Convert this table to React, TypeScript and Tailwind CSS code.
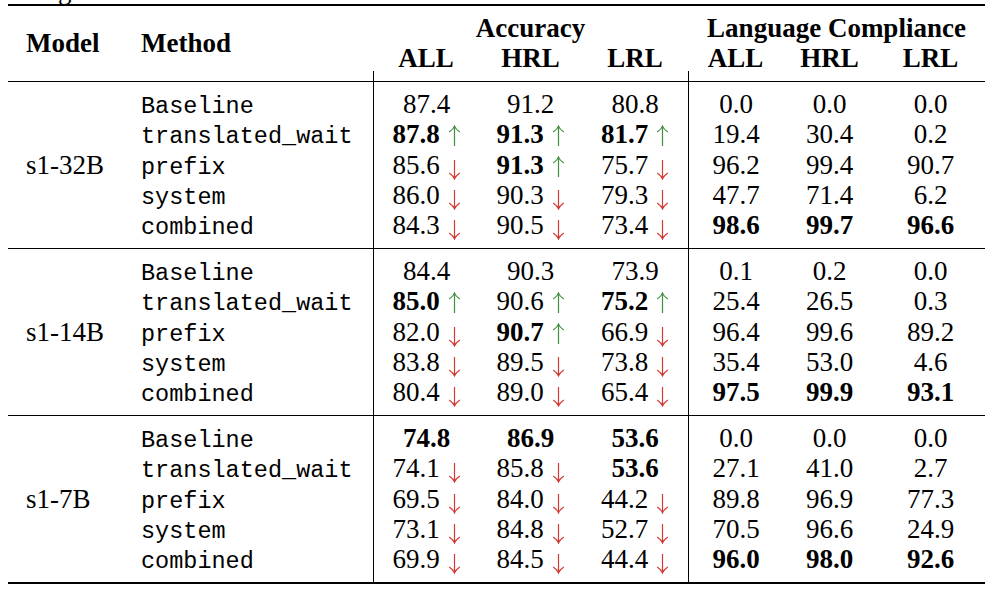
import React from "react";

type Cell = { v: string; b?: boolean; a?: "u" | "d" };

const S = "font-['Liberation_Serif',serif]";
const M = "font-['Liberation_Mono',monospace]";
const ROW = "h-[30.3px] leading-[30.3px]";

const Up = () => (
  <svg width="13" height="21" viewBox="0 0 13 21" className="inline-block ml-[8px] align-[-3px]">
    <path d="M6.5 1.6V21" stroke="#3f8f3f" strokeWidth="1.2" fill="none" />
    <path d="M1.2 7C3.4 5.5 5.6 3.8 6.5 1.1C7.4 3.8 9.6 5.5 11.8 7" stroke="#3f8f3f" strokeWidth="1.2" fill="none" />
  </svg>
);

const Down = () => (
  <svg width="13" height="20" viewBox="0 0 13 20" className="inline-block ml-[8px] align-[-6px]">
    <path d="M6.5 0V18.4" stroke="#d23a32" strokeWidth="1.2" fill="none" />
    <path d="M1.2 13C3.4 14.5 5.6 16.2 6.5 18.9C7.4 16.2 9.6 14.5 11.8 13" stroke="#d23a32" strokeWidth="1.2" fill="none" />
  </svg>
);

const c = (v: string, b?: boolean, a?: "u" | "d"): Cell => ({ v, b, a });

const methods = ["Baseline", "translated_wait", "prefix", "system", "combined"];

const groups: { name: string; acc: Cell[][]; lc: Cell[][] }[] = [
  {
    name: "s1-32B",
    acc: [
      [c("87.4"), c("91.2"), c("80.8")],
      [c("87.8", true, "u"), c("91.3", true, "u"), c("81.7", true, "u")],
      [c("85.6", false, "d"), c("91.3", true, "u"), c("75.7", false, "d")],
      [c("86.0", false, "d"), c("90.3", false, "d"), c("79.3", false, "d")],
      [c("84.3", false, "d"), c("90.5", false, "d"), c("73.4", false, "d")],
    ],
    lc: [
      [c("0.0"), c("0.0"), c("0.0")],
      [c("19.4"), c("30.4"), c("0.2")],
      [c("96.2"), c("99.4"), c("90.7")],
      [c("47.7"), c("71.4"), c("6.2")],
      [c("98.6", true), c("99.7", true), c("96.6", true)],
    ],
  },
  {
    name: "s1-14B",
    acc: [
      [c("84.4"), c("90.3"), c("73.9")],
      [c("85.0", true, "u"), c("90.6", false, "u"), c("75.2", true, "u")],
      [c("82.0", false, "d"), c("90.7", true, "u"), c("66.9", false, "d")],
      [c("83.8", false, "d"), c("89.5", false, "d"), c("73.8", false, "d")],
      [c("80.4", false, "d"), c("89.0", false, "d"), c("65.4", false, "d")],
    ],
    lc: [
      [c("0.1"), c("0.2"), c("0.0")],
      [c("25.4"), c("26.5"), c("0.3")],
      [c("96.4"), c("99.6"), c("89.2")],
      [c("35.4"), c("53.0"), c("4.6")],
      [c("97.5", true), c("99.9", true), c("93.1", true)],
    ],
  },
  {
    name: "s1-7B",
    acc: [
      [c("74.8", true), c("86.9", true), c("53.6", true)],
      [c("74.1", false, "d"), c("85.8", false, "d"), c("53.6", true)],
      [c("69.5", false, "d"), c("84.0", false, "d"), c("44.2", false, "d")],
      [c("73.1", false, "d"), c("84.8", false, "d"), c("52.7", false, "d")],
      [c("69.9", false, "d"), c("84.5", false, "d"), c("44.4", false, "d")],
    ],
    lc: [
      [c("0.0"), c("0.0"), c("0.0")],
      [c("27.1"), c("41.0"), c("2.7")],
      [c("89.8"), c("96.9"), c("77.3")],
      [c("70.5"), c("96.6"), c("24.9")],
      [c("96.0", true), c("98.0", true), c("92.6", true)],
    ],
  },
];

const NumCell = ({ cell }: { cell: Cell }) => (
  <div className={`${ROW} text-center whitespace-nowrap`}>
    <span className={cell.b ? "font-bold" : ""}>{cell.v}</span>
    {cell.a === "u" ? <Up /> : cell.a === "d" ? <Down /> : null}
  </div>
);

const Group = ({ g }: { g: (typeof groups)[number] }) => (
  <div className="flex h-[166px]">
    <div className={`w-[115px] pl-[18px] pt-[7px] ${S}`}>
      {[0, 1, 2, 3, 4].map((i) => (
        <div key={i} className={ROW}>
          {i === 2 ? g.name : "\u00a0"}
        </div>
      ))}
    </div>
    <div className={`w-[250px] pl-[18px] pt-[7px] ${M} text-[23.5px]`}>
      {methods.map((m) => (
        <div key={m} className="h-[30.3px] pt-[5px] leading-[25.3px]">
          {m}
        </div>
      ))}
    </div>
    <div className="w-[315px] border-l border-black pt-[7px] grid grid-cols-[105px_103px_106px] content-start">
      {g.acc.flat().map((cell, i) => (
        <NumCell key={i} cell={cell} />
      ))}
    </div>
    <div className="w-[297px] border-l border-black pt-[7px] grid grid-cols-[94px_93px_109px] content-start">
      {g.lc.flat().map((cell, i) => (
        <NumCell key={i} cell={cell} />
      ))}
    </div>
  </div>
);

export default function App() {
  return (
    <div className={`w-[1000px] h-[596px] bg-white text-black overflow-hidden ${S} text-[27px]`}>
      <div className="h-[4px] overflow-hidden pl-[58px]">
        <div className="-mt-[23px] leading-[27px]">g</div>
      </div>
      <div className="ml-[8px] w-[977px]">
        <div className="h-[2px] bg-black" />
        <div className="grid grid-cols-[115px_250px_315px_297px] grid-rows-[37px_28px_10px] font-bold">
          <div className="row-span-3 pl-[18px] flex items-center">Model</div>
          <div className="row-span-3 pl-[18px] flex items-center">Method</div>
          <div className="flex items-end justify-center leading-[30px]">Accuracy</div>
          <div className="flex items-end justify-center leading-[30px]">Language Compliance</div>
          <div className="grid grid-cols-[106px_103px_106px] leading-[28px] pt-[1px] text-center">
            <div>ALL</div>
            <div>HRL</div>
            <div>LRL</div>
          </div>
          <div className="grid grid-cols-[95px_93px_109px] leading-[28px] pt-[1px] text-center">
            <div>ALL</div>
            <div>HRL</div>
            <div>LRL</div>
          </div>
          <div className="border-l border-black" />
          <div className="border-l border-black" />
        </div>
        <div className="h-px bg-black" />
        <Group g={groups[0]} />
        <div className="h-px bg-black" />
        <Group g={groups[1]} />
        <div className="h-px bg-black" />
        <Group g={groups[2]} />
        <div className="h-[2px] bg-black" />
      </div>
    </div>
  );
}
